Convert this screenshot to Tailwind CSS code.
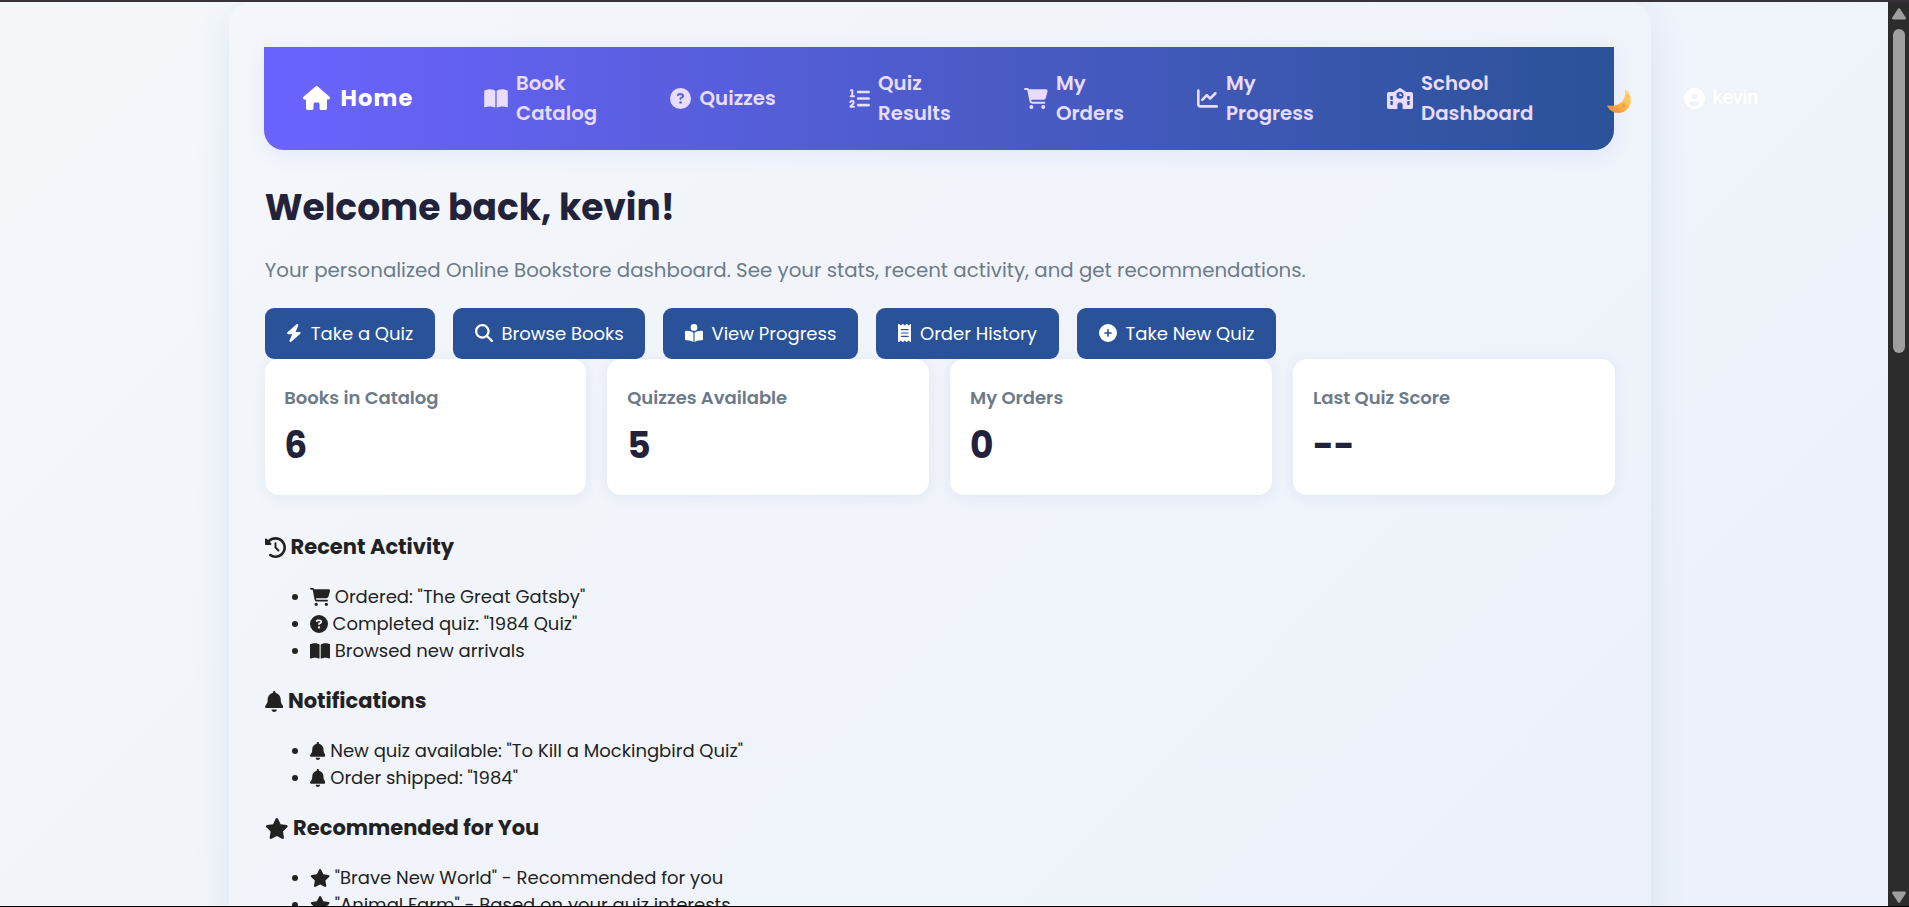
<!DOCTYPE html>
<html lang="en">
<head>
<meta charset="utf-8">
<title>Online Bookstore</title>
<script src="https://cdn.jsdelivr.net/npm/@tailwindcss/browser@4"></script>
</head>
<body class="h-[907px] overflow-hidden bg-black font-[Poppins,sans-serif] text-[#222]">
<svg class="hidden">
  <symbol id="house" viewBox="0 0 576 512"><path d="M575.8 255.5c0 18-15 32.1-32 32.1h-32l.7 160.2c0 2.7-.2 5.4-.5 8.1V472c0 22.1-17.9 40-40 40H456c-1.1 0-2.2 0-3.3-.1c-1.4 .1-2.8 .1-4.2 .1H416 392c-22.1 0-40-17.9-40-40V448 384c0-17.7-14.3-32-32-32H256c-17.7 0-32 14.3-32 32v64 24c0 22.1-17.9 40-40 40H160 128.1c-1.5 0-3-.1-4.5-.2c-1.2 .1-2.4 .2-3.6 .2H104c-22.1 0-40-17.9-40-40V360c0-.9 0-1.9 .1-2.8V287.6H32c-18 0-32-14-32-32.1c0-9 3-17 10-24L266.4 8c7-7 15-8 22-8s15 2 21 7L564.8 231.5c8 7 12 15 11 24z"/></symbol>
  <symbol id="book" viewBox="0 0 576 512"><path d="M249.6 471.5c10.8 3.8 22.4-4.1 22.4-15.5V78.6c0-4.2-1.6-8.4-5-11C247.4 52 202.4 32 144 32C87.5 32 35.1 48.6 9 59.9c-5.6 2.4-9 8-9 14V454.1c0 11.9 12.8 20.2 24.1 16.5C55.6 460.1 105.5 448 144 448c33.9 0 79 14 105.6 23.5zm76.8 0C353 462 398.1 448 432 448c38.5 0 88.4 12.1 119.9 22.6c11.3 3.8 24.1-4.6 24.1-16.5V73.9c0-6.1-3.4-11.6-9-14C540.9 48.6 488.5 32 432 32c-58.4 0-103.4 20-123 35.6c-3.3 2.6-5 6.8-5 11V456c0 11.4 11.7 19.3 22.4 15.5z"/></symbol>
  <symbol id="question" viewBox="0 0 512 512"><path d="M256 512A256 256 0 1 0 256 0a256 256 0 1 0 0 512zM169.8 165.3c7.9-22.3 29.1-37.3 52.8-37.3h58.3c34.9 0 63.1 28.3 63.1 63.1c0 22.6-12.1 43.5-31.7 54.8L280 264.4c-.2 13-10.9 23.6-24 23.6c-13.3 0-24-10.7-24-24V250.5c0-8.6 4.6-16.5 12.1-20.8l44.3-25.4c4.7-2.7 7.6-7.7 7.6-13.1c0-8.4-6.8-15.1-15.1-15.1H222.6c-3.4 0-6.4 2.1-7.5 5.3l-.4 1.2c-4.4 12.5-18.2 19-30.6 14.6s-19-18.2-14.6-30.6l.4-1.2zM224 352a32 32 0 1 1 64 0 32 32 0 1 1 -64 0z"/></symbol>
  <symbol id="list" viewBox="0 0 512 512"><path d="M24 56c0-13.3 10.7-24 24-24H80c13.3 0 24 10.7 24 24V176h16c13.3 0 24 10.7 24 24s-10.7 24-24 24H40c-13.3 0-24-10.7-24-24s10.7-24 24-24H56V80H48C34.7 80 24 69.3 24 56zM86.7 341.2c-6.5-7.4-18.3-6.9-24 1.2L51.5 357.9c-7.7 10.8-22.7 13.3-33.5 5.6s-13.3-22.7-5.6-33.5l11.1-15.6c23.7-33.2 72.3-35.6 99.2-4.9c21.3 24.4 20.8 60.9-1.1 84.7L86.8 432H120c13.3 0 24 10.7 24 24s-10.7 24-24 24H32c-9.5 0-18.2-5.6-22-14.4s-2.1-18.9 4.3-25.9l72-78c5.3-5.8 5.4-14.6 .3-20.5zM224 64H480c17.7 0 32 14.3 32 32s-14.3 32-32 32H224c-17.7 0-32-14.3-32-32s14.3-32 32-32zm0 160H480c17.7 0 32 14.3 32 32s-14.3 32-32 32H224c-17.7 0-32-14.3-32-32s14.3-32 32-32zm0 160H480c17.7 0 32 14.3 32 32s-14.3 32-32 32H224c-17.7 0-32-14.3-32-32s14.3-32 32-32z"/></symbol>
  <symbol id="cart" viewBox="0 0 576 512"><path d="M0 24C0 10.7 10.7 0 24 0H69.5c22 0 41.5 12.8 50.6 32h411c26.3 0 45.5 25 38.6 50.4l-41 152.3c-8.5 31.4-37 53.3-69.5 53.3H170.7l5.4 28.5c2.2 11.3 12.1 19.5 23.6 19.5H488c13.3 0 24 10.7 24 24s-10.7 24-24 24H199.7c-34.6 0-64.3-24.6-70.7-58.5L77.4 54.5c-.7-3.8-4-6.5-7.9-6.5H24C10.7 48 0 37.3 0 24zM128 464a48 48 0 1 1 96 0 48 48 0 1 1 -96 0zm336-48a48 48 0 1 1 0 96 48 48 0 1 1 0-96z"/></symbol>
  <symbol id="chart" viewBox="0 0 512 512"><path d="M64 64c0-17.7-14.3-32-32-32S0 46.3 0 64V400c0 44.2 35.8 80 80 80H480c17.7 0 32-14.3 32-32s-14.3-32-32-32H80c-8.8 0-16-7.2-16-16V64zm406.6 86.6c12.5-12.5 12.5-32.8 0-45.3s-32.8-12.5-45.3 0L320 210.7l-57.4-57.4c-12.5-12.5-32.8-12.5-45.3 0l-112 112c-12.5 12.5-12.5 32.8 0 45.3s32.8 12.5 45.3 0L240 221.3l57.4 57.4c12.5 12.5 32.8 12.5 45.3 0l128-128z"/></symbol>
  <symbol id="school" viewBox="0 0 640 512"><path d="M337.8 5.4C327-1.8 313-1.8 302.2 5.4L166.3 96H48C21.5 96 0 117.5 0 144V464c0 26.5 21.5 48 48 48H256V416c0-35.3 28.7-64 64-64s64 28.7 64 64v96H592c26.5 0 48-21.5 48-48V144c0-26.5-21.5-48-48-48H473.7L337.8 5.4zM96 192h32c8.8 0 16 7.2 16 16v64c0 8.8-7.2 16-16 16H96c-8.8 0-16-7.2-16-16V208c0-8.8 7.2-16 16-16zm400 16c0-8.8 7.2-16 16-16h32c8.8 0 16 7.2 16 16v64c0 8.8-7.2 16-16 16H512c-8.8 0-16-7.2-16-16V208zM96 320h32c8.8 0 16 7.2 16 16v64c0 8.8-7.2 16-16 16H96c-8.8 0-16-7.2-16-16V336c0-8.8 7.2-16 16-16zm400 16c0-8.8 7.2-16 16-16h32c8.8 0 16 7.2 16 16v64c0 8.8-7.2 16-16 16H512c-8.8 0-16-7.2-16-16V336zM232 176a88 88 0 1 1 176 0 88 88 0 1 1 -176 0zm88-48c-8.8 0-16 7.2-16 16v32c0 8.8 7.2 16 16 16h32c8.8 0 16-7.2 16-16s-7.2-16-16-16H336V144c0-8.8-7.2-16-16-16z"/></symbol>
  <symbol id="user" viewBox="0 0 512 512"><path d="M399 384.2C376.9 345.8 335.4 320 288 320H224c-47.4 0-88.9 25.8-111 64.2c35.2 39.2 86.2 63.8 143 63.8s107.8-24.7 143-63.8zM0 256a256 256 0 1 1 512 0A256 256 0 1 1 0 256zm256 16a72 72 0 1 0 0-144 72 72 0 1 0 0 144z"/></symbol>
  <symbol id="bolt" viewBox="0 0 448 512"><path d="M349.4 44.6c5.9-13.7 1.5-29.7-10.6-38.5s-28.6-8-39.9 1.8l-256 224C32.9 240.7 29.3 255 34 267.3S50.8 288 64 288h111.5L98.6 467.4c-5.9 13.7-1.5 29.7 10.6 38.5s28.6 8 39.9-1.8l256-224c10-8.8 13.6-22.9 8.9-35.3S397.2 224 384 224H272.5L349.4 44.6z"/></symbol>
  <symbol id="search" viewBox="0 0 512 512"><path d="M416 208c0 45.9-14.9 88.3-40 122.7L502.6 457.4c12.5 12.5 12.5 32.8 0 45.3s-32.8 12.5-45.3 0L330.7 376c-34.4 25.2-76.8 40-122.7 40C93.1 416 0 322.9 0 208S93.1 0 208 0S416 93.1 416 208zM208 352a144 144 0 1 0 0-288 144 144 0 1 0 0 288z"/></symbol>
  <symbol id="reader" viewBox="0 0 512 512"><path d="M160 96a96 96 0 1 1 192 0A96 96 0 1 1 160 96zm80 152V512l-48.4-24.2c-20.9-10.4-43.5-17-66.8-19.3l-96-9.6C12.5 457.2 0 443.5 0 427V224c0-17.7 14.3-32 32-32H62.3c63.6 0 125.6 19.6 177.7 56zm32 264V248c52.1-36.4 114.1-56 177.7-56H480c17.7 0 32 14.3 32 32V427c0 16.4-12.5 30.2-28.8 31.8l-96 9.6c-23.2 2.3-45.9 8.9-66.8 19.3L272 512z"/></symbol>
  <symbol id="receipt" viewBox="0 0 384 512"><path d="M14 2.2C22.5-1.7 32.5-.3 39.6 5.8L80 40.4 120.4 5.8c9-7.7 22.3-7.7 31.2 0L192 40.4 232.4 5.8c9-7.7 22.3-7.7 31.2 0L304 40.4 344.4 5.8c7.1-6.1 17.1-7.5 25.6-3.6s14 12.4 14 21.8V488c0 9.4-5.5 17.9-14 21.8s-18.5 2.5-25.6-3.6L304 471.6l-40.4 34.6c-9 7.7-22.3 7.7-31.2 0L192 471.6l-40.4 34.6c-9 7.7-22.3 7.7-31.2 0L80 471.6 39.6 506.2c-7.1 6.1-17.1 7.5-25.6 3.6S0 497.4 0 488V24C0 14.6 5.5 6.1 14 2.2zM96 144c-8.8 0-16 7.2-16 16s7.2 16 16 16H288c8.8 0 16-7.2 16-16s-7.2-16-16-16H96zM80 352c0 8.8 7.2 16 16 16H288c8.8 0 16-7.2 16-16s-7.2-16-16-16H96c-8.8 0-16 7.2-16 16zM96 240c-8.8 0-16 7.2-16 16s7.2 16 16 16H288c8.8 0 16-7.2 16-16s-7.2-16-16-16H96z"/></symbol>
  <symbol id="plus" viewBox="0 0 512 512"><path d="M256 512A256 256 0 1 0 256 0a256 256 0 1 0 0 512zM232 344V280H168c-13.3 0-24-10.7-24-24s10.7-24 24-24h64V168c0-13.3 10.7-24 24-24s24 10.7 24 24v64h64c13.3 0 24 10.7 24 24s-10.7 24-24 24H280v64c0 13.3-10.7 24-24 24s-24-10.7-24-24z"/></symbol>
  <symbol id="history" viewBox="0 0 512 512"><path d="M75 75L41 41C25.9 25.9 0 36.6 0 57.9V168c0 13.3 10.7 24 24 24H134.1c21.4 0 32.1-25.9 17-41l-30.8-30.8C155 85.5 203 64 256 64c106 0 192 86 192 192s-86 192-192 192c-40.8 0-78.6-12.7-109.7-34.4c-14.5-10.1-34.4-6.6-44.6 7.9s-6.6 34.4 7.9 44.6C151.2 495 201.7 512 256 512c141.4 0 256-114.6 256-256S397.4 0 256 0C185.3 0 121.3 28.7 75 75zm181 53c-13.3 0-24 10.7-24 24V256c0 6.4 2.5 12.5 7 17l72 72c9.4 9.4 24.6 9.4 33.9 0s9.4-24.6 0-33.9l-65-65V152c0-13.3-10.7-24-24-24z"/></symbol>
  <symbol id="bell" viewBox="0 0 448 512"><path d="M224 0c-17.7 0-32 14.3-32 32V51.2C119 66 64 130.6 64 208v18.8c0 47-17.3 92.4-48.5 127.6l-7.4 8.3c-8.4 9.4-10.4 22.9-5.3 34.4S19.4 416 32 416H416c12.6 0 24-7.4 29.2-18.9s3.1-25-5.3-34.4l-7.4-8.3C401.3 319.2 384 273.9 384 226.8V208c0-77.4-55-142-128-156.8V32c0-17.7-14.3-32-32-32zm45.3 493.3c12-12 18.7-28.3 18.7-45.3H224 160c0 17 6.7 33.3 18.7 45.3s28.3 18.7 45.3 18.7s33.3-6.7 45.3-18.7z"/></symbol>
  <symbol id="star" viewBox="0 0 576 512"><path d="M316.9 18C311.6 7 300.4 0 288.1 0s-23.4 7-28.8 18L195 150.3 51.4 171.5c-12 1.8-22 10.2-25.7 21.7s-.7 24.2 7.9 32.7L137.8 329 113.2 474.7c-2 12 3 24.2 12.9 31.3s23 8 33.8 2.3l128.3-68.5 128.3 68.5c10.8 5.7 23.9 4.9 33.8-2.3s14.9-19.3 12.9-31.3L438.5 329 542.7 225.9c8.6-8.5 11.7-21.2 7.9-32.7s-13.7-19.9-25.7-21.7L381.2 150.3 316.9 18z"/></symbol>
</svg>

<div class="flex h-[906px] overflow-hidden border-t-2 border-[#38323a] bg-[#2c2c2c]">
  <div class="h-[904px] w-[1888px] overflow-hidden bg-linear-135 from-[#f4f8fb] via-[#f0f4fa] to-[#ecf1fa]">
    <main class="ml-[229px] h-[1400px] w-[1422px] rounded-[22px] px-[35px] pt-[45px] shadow-[0_9px_36px_rgba(42,82,152,0.1)]">
      <nav class="flex h-[103px] w-[1350px] items-center gap-[72px] rounded-b-[20px] bg-linear-to-r from-[#6c63ff] to-[#2a5298] pb-[2px] pl-[39px] text-[19.8px] leading-[30px] font-semibold text-[#e8dcff] shadow-[0_4px_20px_rgba(108,99,255,0.1)]">
        <div class="flex w-[109px] shrink-0 items-center gap-[10.5px] text-[22.5px] font-bold tracking-[1.1px] text-white"><svg class="h-[24px] w-[27px] shrink-0 fill-current"><use href="#house"/></svg><span>Home</span></div>
        <div class="flex w-[114px] shrink-0 items-center gap-[8px]"><svg class="mt-[2px] h-[21px] w-[24px] shrink-0 fill-current"><use href="#book"/></svg><span>Book<br>Catalog</span></div>
        <div class="flex w-[107px] shrink-0 items-center gap-[8.5px]"><svg class="mt-[2px] h-[21px] w-[21px] shrink-0 fill-current"><use href="#question"/></svg><span>Quizzes</span></div>
        <div class="flex w-[103px] shrink-0 items-center gap-[8px]"><svg class="mt-[2px] h-[21px] w-[21px] shrink-0 fill-current"><use href="#list"/></svg><span>Quiz<br>Results</span></div>
        <div class="flex w-[101px] shrink-0 items-center gap-[8px]"><svg class="mt-[2px] h-[21px] w-[24px] shrink-0 fill-current"><use href="#cart"/></svg><span>My<br>Orders</span></div>
        <div class="flex w-[118px] shrink-0 items-center gap-[8px]"><svg class="mt-[2px] h-[21px] w-[21px] shrink-0 fill-current"><use href="#chart"/></svg><span>My<br>Progress</span></div>
        <div class="flex w-[148px] shrink-0 items-center gap-[8px]"><svg class="mt-[2px] h-[21px] w-[26px] shrink-0 fill-current"><use href="#school"/></svg><span>School<br>Dashboard</span></div>
        <svg viewBox="0 0 24 24" class="mt-[7px] h-[24px] w-[24px] shrink-0">
          <defs><linearGradient id="moon" x1="1" y1="0" x2="0.2" y2="1"><stop offset="0" stop-color="#ffe08a"/><stop offset="0.6" stop-color="#fbb748"/><stop offset="1" stop-color="#ee8a45"/></linearGradient></defs>
          <path fill="url(#moon)" d="M18.3.4C21.5 2 24 6 23.9 11.2C23.8 18.500 18.300 23.900 11.500 23.900C6.500 23.900 2.300 21.300.3 17.500C0 16.900.3 16.500 1 16.600C6 17.400 11.500 16.500 15 12.600C18.200 9.100 18.600 5 17.700 1C17.600.4 17.900.2 18.300.4z"/>
          <circle cx="16.500" cy="16.200" r="2" fill="#f2a13c"/><circle cx="21" cy="7.500" r="1.200" fill="#f6b552"/><circle cx="10" cy="20" r="1.200" fill="#ee9838"/>
        </svg>
        <div class="-ml-[19.5px] flex shrink-0 items-center gap-[8px] font-[Roboto,sans-serif] font-medium text-white"><svg class="mt-[2px] h-[21px] w-[21px] shrink-0 fill-current"><use href="#user"/></svg><span class="tracking-[-0.2px]">kevin</span></div>
      </nav>

      <h1 class="mt-[31px] ml-[0.7px] text-[36px] leading-[54px] font-bold text-[#22223b]">Welcome back, kevin!</h1>
      <p class="mt-[20px] ml-[0.7px] text-[19.8px] leading-[30px] text-[#6c7a89]">Your personalized Online Bookstore dashboard. See your stats, recent activity, and get recommendations.</p>

      <div class="mt-[23px] ml-px flex gap-[18px] text-[18px] leading-[51px] whitespace-nowrap text-white">
        <div class="flex h-[51px] w-[170px] items-center gap-[9px] rounded-[9px] bg-[#2a5298] pl-[21px]"><svg class="-mt-[2px] h-[18px] w-[15.75px] shrink-0 fill-current"><use href="#bolt"/></svg><span>Take a Quiz</span></div>
        <div class="flex h-[51px] w-[192px] items-center gap-[9px] rounded-[9px] bg-[#2a5298] pl-[21.5px]"><svg class="-mt-[2px] h-[18px] w-[18px] shrink-0 fill-current"><use href="#search"/></svg><span>Browse Books</span></div>
        <div class="flex h-[51px] w-[195px] items-center gap-[9px] rounded-[9px] bg-[#2a5298] pl-[21.5px]"><svg class="-mt-[2px] h-[18px] w-[18px] shrink-0 fill-current"><use href="#reader"/></svg><span>View Progress</span></div>
        <div class="flex h-[51px] w-[183px] items-center gap-[9px] rounded-[9px] bg-[#2a5298] pl-[21.5px]"><svg class="-mt-[2px] h-[18px] w-[13.5px] shrink-0 fill-current"><use href="#receipt"/></svg><span>Order History</span></div>
        <div class="flex h-[51px] w-[199px] items-center gap-[9px] rounded-[9px] bg-[#2a5298] pl-[21.5px]"><svg class="-mt-[2px] h-[18px] w-[18px] shrink-0 fill-current"><use href="#plus"/></svg><span>Take New Quiz</span></div>
      </div>

      <div class="ml-[0.5px] grid w-[1350px] grid-cols-4 gap-[21.500px]">
        <div class="h-[136px] rounded-[14px] bg-white px-[19.8px] pt-[25px] shadow-[0_2px_14px_rgba(42,82,152,0.08)]"><div class="text-[18px] leading-[27px] font-semibold text-[#6c7a89]">Books in Catalog</div><div class="mt-[8px] text-[36px] leading-[54px] font-bold text-[#22223b]">6</div></div>
        <div class="h-[136px] rounded-[14px] bg-white px-[19.8px] pt-[25px] shadow-[0_2px_14px_rgba(42,82,152,0.08)]"><div class="text-[18px] leading-[27px] font-semibold text-[#6c7a89]">Quizzes Available</div><div class="mt-[8px] text-[36px] leading-[54px] font-bold text-[#22223b]">5</div></div>
        <div class="h-[136px] rounded-[14px] bg-white px-[19.8px] pt-[25px] shadow-[0_2px_14px_rgba(42,82,152,0.08)]"><div class="text-[18px] leading-[27px] font-semibold text-[#6c7a89]">My Orders</div><div class="mt-[8px] text-[36px] leading-[54px] font-bold text-[#22223b]">0</div></div>
        <div class="h-[136px] rounded-[14px] bg-white px-[19.8px] pt-[25px] shadow-[0_2px_14px_rgba(42,82,152,0.08)]"><div class="text-[18px] leading-[27px] font-semibold text-[#6c7a89]">Last Quiz Score</div><div class="mt-[8px] text-[36px] leading-[54px] font-bold text-[#22223b]">--</div></div>
      </div>

      <h2 class="mt-[36px] ml-[0.5px] flex items-center gap-[5px] text-[21px] leading-[32px] font-bold"><svg class="h-[21px] w-[21px] fill-current"><use href="#history"/></svg>Recent Activity</h2>
      <ul class="mt-[20px] pl-[27.5px] text-[18px] leading-[27px]">
        <li class="flex items-center gap-[5px]"><span class="mr-[7px] h-[6px] w-[6px] rounded-full bg-[#222]"></span><svg class="h-[18px] w-[20.25px] fill-current"><use href="#cart"/></svg>Ordered: "The Great Gatsby"</li>
        <li class="flex items-center gap-[5px]"><span class="mr-[7px] h-[6px] w-[6px] rounded-full bg-[#222]"></span><svg class="h-[18px] w-[18px] fill-current"><use href="#question"/></svg>Completed quiz: "1984 Quiz"</li>
        <li class="flex items-center gap-[5px]"><span class="mr-[7px] h-[6px] w-[6px] rounded-full bg-[#222]"></span><svg class="h-[18px] w-[20.25px] fill-current"><use href="#book"/></svg>Browsed new arrivals</li>
      </ul>
      <h2 class="mt-[21px] ml-[0.5px] flex items-center gap-[5px] text-[21px] leading-[32px] font-bold"><svg class="h-[21px] w-[18.400px] fill-current"><use href="#bell"/></svg>Notifications</h2>
      <ul class="mt-[20px] pl-[27.5px] text-[18px] leading-[27px]">
        <li class="flex items-center gap-[5px]"><span class="mr-[7px] h-[6px] w-[6px] rounded-full bg-[#222]"></span><svg class="h-[18px] w-[15.75px] fill-current"><use href="#bell"/></svg>New quiz available: "To Kill a Mockingbird Quiz"</li>
        <li class="flex items-center gap-[5px]"><span class="mr-[7px] h-[6px] w-[6px] rounded-full bg-[#222]"></span><svg class="h-[18px] w-[15.75px] fill-current"><use href="#bell"/></svg>Order shipped: "1984"</li>
      </ul>
      <h2 class="mt-[21px] ml-[0.5px] flex items-center gap-[5px] text-[21px] leading-[32px] font-bold"><svg class="h-[21px] w-[23.600px] fill-current"><use href="#star"/></svg>Recommended for You</h2>
      <ul class="mt-[20px] pl-[27.5px] text-[18px] leading-[27px]">
        <li class="flex items-center gap-[5px]"><span class="mr-[7px] h-[6px] w-[6px] rounded-full bg-[#222]"></span><svg class="h-[18px] w-[20.25px] fill-current"><use href="#star"/></svg>"Brave New World" - Recommended for you</li>
        <li class="flex items-center gap-[5px]"><span class="mr-[7px] h-[6px] w-[6px] rounded-full bg-[#222]"></span><svg class="h-[18px] w-[20.25px] fill-current"><use href="#star"/></svg>"Animal Farm" - Based on your quiz interests</li>
      </ul>
    </main>
  </div>
  <div class="flex h-[904px] w-[21px] flex-col items-center">
    <svg viewBox="0 0 14 12" class="mt-[6px] h-[12px] w-[14px]"><path fill="#9f9f9f" d="M6 .8Q7-.4 8 .8L13.700 9.500Q14.200 11.500 12.500 11.500H1.500Q-.2 11.500.3 9.500z"/></svg>
    <div class="mt-[9px] h-[324px] w-[12px] rounded-full bg-[#9f9f9f]"></div>
    <svg viewBox="0 0 14 12" class="mt-auto mb-[3px] h-[12px] w-[14px] rotate-180"><path fill="#9f9f9f" d="M6 .8Q7-.4 8 .8L13.700 9.500Q14.200 11.500 12.500 11.500H1.500Q-.2 11.500.3 9.500z"/></svg>
  </div>
</div>
</body>
</html>
